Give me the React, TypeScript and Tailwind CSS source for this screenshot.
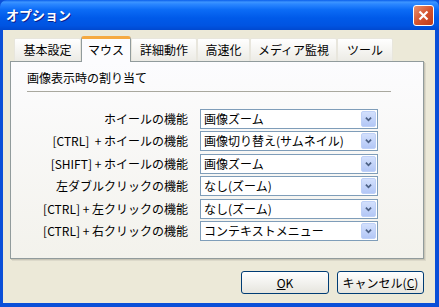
import React from "react";

const FONT = { fontFamily: '"Noto Sans CJK JP", "Liberation Sans", sans-serif' };

function Chevron() {
  return (
    <svg width="15" height="16" viewBox="0 0 15 16">
      <path d="M4.5 6.5 L7.5 9.5 L10.5 6.5" fill="none" stroke="#4D6185" strokeWidth="2" />
    </svg>
  );
}

function Combo({ value }: { value: string }) {
  return (
    <div className="flex h-[20px] w-[178px] items-center border border-[#7F9DB9] bg-white">
      <div className="flex-1 pl-[3px] text-[12px] leading-none text-black whitespace-nowrap">{value}</div>
      <div className="mr-[1px] flex h-[16px] w-[15px] items-center justify-center rounded-[2px] border border-[#BED0F7] bg-gradient-to-b from-[#D3E0FC] to-[#B3C7F6]">
        <Chevron />
      </div>
    </div>
  );
}

const rows: [string, string][] = [
  ["ホイールの機能", "画像ズーム"],
  ["[CTRL]  + ホイールの機能", "画像切り替え(サムネイル)"],
  ["[SHIFT] + ホイールの機能", "画像ズーム"],
  ["左ダブルクリックの機能", "なし(ズーム)"],
  ["[CTRL] + 左クリックの機能", "なし(ズーム)"],
  ["[CTRL] + 右クリックの機能", "コンテキストメニュー"],
];

const tabs: { label: string; w: number }[] = [
  { label: "基本設定", w: 67 },
  { label: "マウス", w: 50 },
  { label: "詳細動作", w: 66 },
  { label: "高速化", w: 53 },
  { label: "メディア監視", w: 87 },
  { label: "ツール", w: 56 },
];

export default function App() {
  return (
    <div className="h-[307px] w-[439px] overflow-hidden bg-[#0A4FD8]" style={FONT}>
      {/* Title bar */}
      <div className="flex h-[30px] items-center justify-between rounded-t-[7px] bg-[linear-gradient(to_bottom,#0A5EEB_0%,#3D95FF_7%,#2A86FF_14%,#0C6CF6_32%,#005AE9_60%,#0054E2_85%,#0049D0_100%)] pl-[6px] pr-[5px]">
        <span className="text-[13px] font-bold text-white [text-shadow:1px_1px_0_#0A1E8C]">オプション</span>
        <div className="flex h-[21px] w-[21px] items-center justify-center rounded-[3px] border border-white bg-gradient-to-br from-[#E8916E] via-[#D5542F] to-[#BF3A18]">
          <svg width="11" height="11" viewBox="0 0 11 11">
            <path d="M1.5 1.5 L9.5 9.5 M9.5 1.5 L1.5 9.5" stroke="white" strokeWidth="2.2" />
          </svg>
        </div>
      </div>
      {/* Body */}
      <div className="mx-[3px] mr-[4px] mb-[4px] flex h-[273px] flex-col bg-[#ECE9D8] pl-[7px] pr-[11px] pt-[8px]">
        {/* Tabs */}
        <div className="flex h-[23px] items-end pl-[4px]">
          {tabs.map((t, i) =>
            i === 1 ? (
              <div
                key={t.label}
                style={{ width: t.w }}
                className="relative z-10 -mb-px flex h-[26px] shrink-0 items-center justify-center rounded-t-[3px] border-x border-t-[3px] border-x-[#919B9C] border-t-[#F5A941] bg-[#FCFCFE] pb-[2px] text-[12px] text-black"
              >
                {t.label}
              </div>
            ) : (
              <div
                key={t.label}
                style={{ width: t.w }}
                className="flex h-[23px] shrink-0 items-center justify-center rounded-t-[2px] border-x border-t border-[#E8E6DD] bg-gradient-to-b from-white to-[#ECEBE5] text-[12px] text-black"
              >
                {t.label}
              </div>
            )
          )}
        </div>
        {/* Panel */}
        <div className="h-[198px] border border-[#919B9C] bg-gradient-to-b from-[#FCFCFE] to-[#F3F2EC] shadow-[1px_1px_0_#C8C5B6,2px_2px_0_#DCD9CA]">
          <div className="pl-[16px] pr-[32px] pt-[8px]">
            <div className="text-[12px] leading-[15px] text-black">画像表示時の割り当て</div>
            <div className="mt-[6px] h-px bg-[#A9A89F]" />
          </div>
          <div className="mt-[17px] flex flex-col gap-[2.4px]">
            {rows.map(([l, v]) => (
              <div key={l} className="flex items-center">
                <div className="w-[177px] text-right text-[12px] leading-none text-black whitespace-pre">{l}</div>
                <div className="ml-[12px]">
                  <Combo value={v} />
                </div>
              </div>
            ))}
          </div>
        </div>
        {/* Buttons */}
        <div className="mt-[12px] flex justify-end gap-[8px]">
          <button className="h-[23px] w-[88px] rounded-[3px] border border-[#003C74] bg-gradient-to-b from-white to-[#E6E5DE] text-[12px] text-black">
            <span className="underline">O</span>K
          </button>
          <button className="h-[23px] w-[87px] rounded-[3px] border border-[#003C74] bg-gradient-to-b from-white to-[#E6E5DE] text-[12px] text-black">
            キャンセル(<span className="underline">C</span>)
          </button>
        </div>
      </div>
    </div>
  );
}
